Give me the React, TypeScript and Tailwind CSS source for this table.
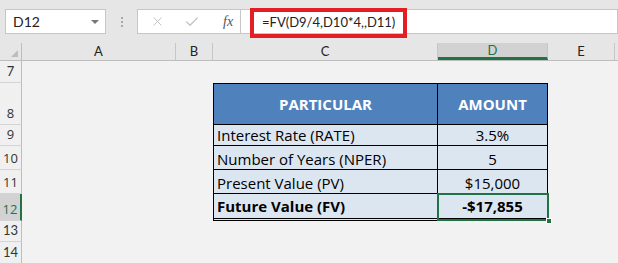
import { X, Check } from "lucide-react";

const cols = [
  { id: "A", w: "w-[154px]" },
  { id: "B", w: "w-[37px]" },
  { id: "C", w: "w-[225px]" },
  { id: "D", w: "w-[110px]" },
  { id: "E", w: "w-[67px]" },
];

const items = [
  { n: 9, h: "h-[21px]", label: "Interest Rate (RATE)", value: "3.5%" },
  { n: 10, h: "h-[24px]", label: "Number of Years (NPER)", value: "5" },
  { n: 11, h: "h-[24px]", label: "Present Value (PV)", value: "$15,000" },
];

function RowHead({ n, active }: { n: number; active?: boolean }) {
  return (
    <div
      className={
        "w-[22px] shrink-0 flex items-end justify-center pb-[1px] text-[13px] border-b border-[#D4D4D4] " +
        (active
          ? "bg-[#D2D2D2] text-[#217346] border-r-2 border-r-[#217346]"
          : "bg-[#F0F0F0] text-[#333] border-r border-r-[#BDBDBD]")
      }
    >
      {n}
    </div>
  );
}

function FormulaBar() {
  return (
    <div className="h-[43px] bg-[#E6E6E6] flex items-start pt-[9px] pl-[5px]">
      <div className="w-[101px] h-[25px] bg-white border border-[#C6C6C6] flex items-center justify-between pl-[7px] pr-[6px] text-[14px] text-[#222]">
        <span>D12</span>
        <span className="w-0 h-0 border-l-[4px] border-r-[4px] border-t-[4px] border-l-transparent border-r-transparent border-t-[#777]" />
      </div>
      <div className="w-[31px] h-[25px] flex flex-col items-center justify-center gap-[2px]">
        <span className="w-[2px] h-[2px] bg-[#A8A8A8]" />
        <span className="w-[2px] h-[2px] bg-[#A8A8A8]" />
        <span className="w-[2px] h-[2px] bg-[#A8A8A8]" />
      </div>
      <div className="w-[103px] h-[25px] bg-white border border-[#C6C6C6] border-r-0 flex items-center pl-[12px] gap-[19px]">
        <X size={15} strokeWidth={1.3} color="#B5B5B5" />
        <Check size={16} strokeWidth={2} color="#C4C4C4" />
        <span className="ml-[4px] font-['Liberation_Serif'] italic text-[14px] text-[#555]">
          fx
        </span>
      </div>
      <div className="flex-1 h-[25px] bg-white border border-[#C6C6C6] relative">
        {/* red highlight around the formula */}
        <div className="absolute left-[9px] -top-[2px] w-[157px] h-[30px] border-[4px] border-[#E41E25] flex items-center pl-[8px] text-[13px] text-[#222] whitespace-nowrap">
          =FV(D9/4,D10*4,,D11)
        </div>
      </div>
    </div>
  );
}

function ColumnHeader() {
  return (
    <div className="h-[18px] flex bg-[#E6E6E6] border-b border-[#BDBDBD]">
      <div className="w-[22px] shrink-0 relative border-r border-[#BDBDBD]">
        <span className="absolute right-[3px] bottom-[3px] w-0 h-0 border-b-[7px] border-l-[7px] border-b-[#BDBDBD] border-l-transparent" />
      </div>
      {cols.map((c) => (
        <div
          key={c.id}
          className={
            c.w +
            " shrink-0 flex items-center justify-center text-[13px] border-r border-[#C6C6C6] " +
            (c.id === "D"
              ? "bg-[#D2D2D2] text-[#217346] border-b-[3px] border-b-[#217346] pt-[2px]"
              : "text-[#222]")
          }
        >
          {c.id}
        </div>
      ))}
    </div>
  );
}

export default function App() {
  return (
    <div className="w-[618px] h-[263px] overflow-hidden bg-[#F2F2F2] font-['Lato',sans-serif]">
      <FormulaBar />
      <ColumnHeader />

      {/* row 7 */}
      <div className="flex h-[22px]">
        <RowHead n={7} />
      </div>

      {/* row 8: table heading */}
      <div className="flex h-[42px] font-['Open_Sans',sans-serif]">
        <RowHead n={8} />
        <div className="w-[191px] shrink-0" />
        <div className="w-[225px] shrink-0 bg-[#4F81BD] border border-black flex items-center justify-center text-white font-bold text-[15px]">
          PARTICULAR
        </div>
        <div className="w-[110px] shrink-0 bg-[#4F81BD] border border-l-0 border-black flex items-center justify-center text-white font-bold text-[15px]">
          AMOUNT
        </div>
      </div>

      {items.map((it) => (
        <div key={it.n} className={"flex font-['Open_Sans',sans-serif] " + it.h}>
          <RowHead n={it.n} />
          <div className="w-[191px] shrink-0" />
          <div className="w-[225px] shrink-0 bg-[#DCE6F1] border-x border-b border-black flex items-end pl-[3px] text-[15px] leading-[20px] text-black">
            {it.label}
          </div>
          <div className="w-[110px] shrink-0 bg-[#DCE6F1] border-r border-b border-black flex items-end justify-center text-[15px] leading-[20px] text-black">
            {it.value}
          </div>
        </div>
      ))}

      {/* row 12: result */}
      <div className="flex h-[27px] font-['Open_Sans',sans-serif]">
        <RowHead n={12} active />
        <div className="w-[191px] shrink-0" />
        <div className="w-[225px] shrink-0 bg-[#DCE6F1] border-x border-b-[3px] border-b-black border-double border-x-black flex items-center pl-[3px] text-[15px] font-bold text-black">
          Future Value (FV)
        </div>
        <div className="relative w-[110px] shrink-0 bg-[#DCE6F1] border-r border-b-[3px] border-double border-black flex items-center justify-center text-[15px] font-bold text-black">
          -$17,855
          {/* active cell frame and fill handle */}
          <div className="absolute -left-[1px] -top-[1px] -right-[2px] -bottom-[3px] border-2 border-[#217346]" />
          <div className="absolute -right-[5px] -bottom-[6px] w-[6px] h-[6px] bg-[#217346] border border-white" />
        </div>
      </div>

      <div className="flex h-[21px]">
        <RowHead n={13} />
      </div>
      <div className="flex h-[22px]">
        <RowHead n={14} />
      </div>
    </div>
  );
}
